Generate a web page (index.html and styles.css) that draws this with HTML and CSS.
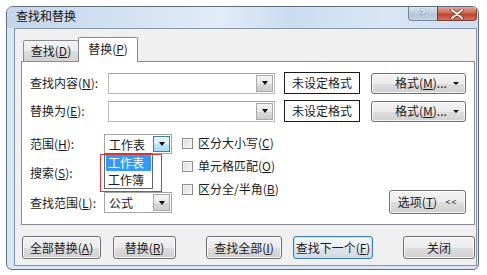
FILE: index.html
```html
<!DOCTYPE html>
<html lang="zh-CN">
<head>
<meta charset="utf-8">
<title>查找和替换</title>
<link rel="stylesheet" href="styles.css">
</head>
<body>
<div class="window">
  <div class="titlebar">
    <span class="title">查找和替换</span>
    <div class="caption-btns">
      <div class="cap help">?</div>
      <div class="cap close">
        <svg width="14" height="10" viewBox="0 0 14 10"><path d="M2 1 L12 9 M12 1 L2 9" stroke="#6b2a22" stroke-width="3.4" stroke-linecap="round"/><path d="M2 1 L12 9 M12 1 L2 9" stroke="#fff" stroke-width="2" stroke-linecap="round"/></svg>
      </div>
    </div>
  </div>
  <div class="client">
    <div class="tabs">
      <div class="tab">查找(<u>D</u>)</div>
      <div class="tab active">替换(<u>P</u>)</div>
    </div>
    <div class="panel">
      <div class="row">
        <span class="lbl">查找内容(<u>N</u>):</span>
        <div class="input"><span class="ddbtn"><i class="tri"></i></span></div>
        <div class="fmtbox">未设定格式</div>
        <div class="btn fmtbtn"><span class="fmttext">格式(<u>M</u>)...</span><i class="tri"></i></div>
      </div>
      <div class="row row2">
        <span class="lbl">替换为(<u>E</u>):</span>
        <div class="input"><span class="ddbtn"><i class="tri"></i></span></div>
        <div class="fmtbox">未设定格式</div>
        <div class="btn fmtbtn"><span class="fmttext">格式(<u>M</u>)...</span><i class="tri"></i></div>
      </div>
      <div class="lower">
        <div class="opts">
          <span class="lbl">范围(<u>H</u>):</span>
          <div class="combo open">
            <span class="cval">工作表</span>
            <span class="ddbtn hot"><i class="tri"></i></span>
            <div class="droplist">
              <div class="item sel">工作表</div>
              <div class="item">工作簿</div>
            </div>
            <div class="mark"></div>
          </div>
          <span class="lbl">搜索(<u>S</u>):</span>
          <span></span>
          <span class="lbl">查找范围(<u>L</u>):</span>
          <div class="combo">
            <span class="cval">公式</span>
            <span class="ddbtn"><i class="tri"></i></span>
          </div>
        </div>
        <div class="checks">
          <div class="chk"><span class="box"></span>区分大小写(<u>C</u>)</div>
          <div class="chk"><span class="box"></span>单元格匹配(<u>O</u>)</div>
          <div class="chk"><span class="box"></span>区分全/半角(<u>B</u>)</div>
        </div>
        <div class="btn optbtn">选项(<u>T</u>)<span class="lt">&lt;&lt;</span></div>
      </div>
    </div>
    <div class="actions">
      <div class="btn b1">全部替换(<u>A</u>)</div>
      <div class="btn b2">替换(<u>R</u>)</div>
      <div class="btn b3">查找全部(<u>I</u>)</div>
      <div class="btn b4 default">查找下一个(<u>F</u>)</div>
      <div class="btn b5">关闭</div>
    </div>
  </div>
</div>
</body>
</html>
```

FILE: styles.css
```css
* { box-sizing: border-box; }
html, body { margin: 0; padding: 0; }
body {
  width: 487px;
  height: 275px;
  overflow: hidden;
  background: #fff;
  padding: 6px 0 0 6px;
  font-family: "Noto Sans CJK SC", "Microsoft YaHei", sans-serif;
  font-size: 12px;
  line-height: 16px;
  color: #1b1b1b;
}
u { text-decoration: underline; text-underline-offset: 1px; }

.window {
  width: 473px;
  height: 264px;
  border: 1px solid #5f6f83;
  border-radius: 7px 7px 6px 6px;
  background: #dae6f3;
  display: flex;
  flex-direction: column;
  overflow: hidden;
}
.titlebar {
  height: 21px;
  display: flex;
  align-items: flex-start;
  padding-left: 9px;
  background: linear-gradient(90deg, #c4d6ec 0%, #d3e1f1 25%, #e2ecf7 45%, #cbdcef 60%, #d9e6f4 80%, #cfdef0 100%);
}
.title {
  margin-top: 1px;
  line-height: 16px;
  font-size: 12px;
  color: #111;
}
.caption-btns {
  margin-left: auto;
  margin-right: 1px;
  display: flex;
  align-items: flex-start;
}
.cap {
  height: 14px;
  display: flex;
  align-items: center;
  justify-content: center;
}
.help {
  width: 29px;
  border: 1px solid #76879c;
  border-top: none;
  border-right: none;
  border-radius: 0 0 0 4px;
  background: linear-gradient(#dbe4ee, #b7c6d8 60%, #c3d1e1);
  color: #f4f7fb;
  font-family: "DejaVu Sans", sans-serif;
  font-weight: bold;
  font-size: 11px;
  line-height: 12px;
  text-shadow: 0 0 1px #4d5d72, 0 0 1px #4d5d72;
}
.close {
  width: 40px;
  border: 1px solid #7d3a30;
  border-top: none;
  border-radius: 0 0 4px 0;
  background: linear-gradient(#e7a496, #cf6a57 45%, #c1432f 55%, #d4715b);
}

.client {
  flex: 1;
  margin: 0 1px 3px 7px;
  border: 1px solid #8596ab;
  background: #f0f0f0;
  padding: 8px 1px 0 6px;
  display: flex;
  flex-direction: column;
}
.tabs {
  display: flex;
  align-items: flex-end;
  height: 24px;
  padding-left: 2px;
}
.tab {
  width: 56px;
  height: 21px;
  border: 1px solid #898c95;
  border-bottom: none;
  border-radius: 2px 2px 0 0;
  background: linear-gradient(#f3f3f3, #ebebeb 50%, #dedede 51%, #d2d2d2);
  text-align: center;
  line-height: 19px;
}
.tab.active {
  width: 60px;
  height: 25px;
  margin-left: -1px;
  margin-bottom: -1px;
  background: #fff;
  position: relative;
  z-index: 1;
  line-height: 22px;
}

.panel {
  width: 454px;
  height: 164px;
  border: 1px solid #898c95;
  background: #fff;
  padding: 10px 0 0 8px;
}
.row {
  display: flex;
  align-items: center;
  height: 22px;
}
.row2 { margin-top: 6px; }
.row .lbl { width: 78px; }

.input {
  width: 167px;
  height: 21px;
  border: 1px solid #b9b9b9;
  border-top-color: #a3a3a3;
  background: #fff;
  display: flex;
  justify-content: flex-end;
  align-items: center;
  padding: 1px;
}
.ddbtn {
  width: 17px;
  height: 17px;
  border: 1px solid #a9a9a9;
  background: linear-gradient(#f4f4f4, #e9e9e9 50%, #d9d9d9 51%, #cdcdcd);
  display: flex;
  align-items: center;
  justify-content: center;
}
.ddbtn.hot {
  border-color: #3c7fb1;
  background: linear-gradient(#eaf6fd, #d9f0fc 50%, #bee6fd 51%, #a7d9f5);
}
.tri {
  width: 0;
  height: 0;
  border-left: 3.5px solid transparent;
  border-right: 3.5px solid transparent;
  border-top: 4px solid #111;
}
.fmtbox {
  margin-left: 9px;
  width: 76px;
  height: 22px;
  border: 1px solid #1a1a1a;
  background: #fff;
  text-align: center;
  line-height: 20px;
}
.btn {
  border: 1px solid #707070;
  border-radius: 3px;
  background: linear-gradient(#f3f3f3, #ebebeb 50%, #dddddd 51%, #d0d0d0);
  box-shadow: inset 0 0 0 1px rgba(255,255,255,0.75);
  display: flex;
  align-items: center;
  justify-content: center;
}
.fmtbtn {
  margin-left: 11px;
  width: 95px;
  height: 21px;
  justify-content: flex-start;
  padding-left: 23px;
}
.fmttext { flex: 1; }
.fmtbtn .tri {
  margin-right: 6px;
  border-left-width: 3px;
  border-right-width: 3px;
  border-top-width: 3px;
}

.lower {
  display: flex;
  margin-top: 12px;
  height: 80px;
}
.opts {
  display: grid;
  grid-template-columns: 74px 68px;
  grid-template-rows: 20px 38px 21px;
  align-items: center;
}
.combo {
  position: relative;
  height: 100%;
  border: 1px solid #a5a5a5;
  background: #fff;
  display: flex;
  align-items: center;
  padding: 1px;
}
.cval { flex: 1; padding-left: 3px; font-size: 12px; line-height: 15px; }
.combo .ddbtn { height: 100%; }
.droplist {
  position: absolute;
  left: -1px;
  top: 100%;
  width: 49px;
  height: 36px;
  border: 1px solid #646464;
  background: #fff;
  z-index: 2;
}
.item {
  height: 17px;
  line-height: 17px;
  margin: 0 1px;
  padding-left: 2px;
  font-size: 12px;
  overflow: hidden;
}
.item.sel { background: #3399ff; color: #fff; }
.mark {
  position: absolute;
  left: -5px;
  top: 19px;
  width: 62px;
  height: 38px;
  border: 1px solid #d23b3e;
  z-index: 3;
}

.checks {
  margin-left: 10px;
  display: flex;
  flex-direction: column;
  gap: 5px;
}
.chk {
  height: 18px;
  display: flex;
  align-items: center;
}
.box {
  width: 11px;
  height: 11px;
  margin-right: 5px;
  border: 1px solid #8e8f8f;
  background: linear-gradient(135deg, #dcdcdc, #f7f7f7);
  box-shadow: inset 0 0 0 1px #f4f4f4;
}
.optbtn {
  margin-left: auto;
  margin-right: 8px;
  align-self: flex-end;
  width: 77px;
  height: 24px;
}
.lt {
  margin-left: 8px;
  font-size: 9px;
  letter-spacing: 1px;
}

.actions {
  display: flex;
  margin-top: 11px;
}
.actions .btn { height: 23px; }
.b1 { margin-left: 1px; width: 79px; }
.b2 { margin-left: 12px; width: 63px; }
.b3 { margin-left: 30px; width: 76px; }
.b4 { margin-left: 11px; width: 80px; }
.b5 { margin-left: 30px; width: 72px; }
.default {
  border-color: #3c7fb1;
  box-shadow: inset 0 0 0 1px #b7e2f8;
  background: linear-gradient(#f3f8fb, #eaf1f6 50%, #dbe5ec 51%, #d0dbe3);
}
```
